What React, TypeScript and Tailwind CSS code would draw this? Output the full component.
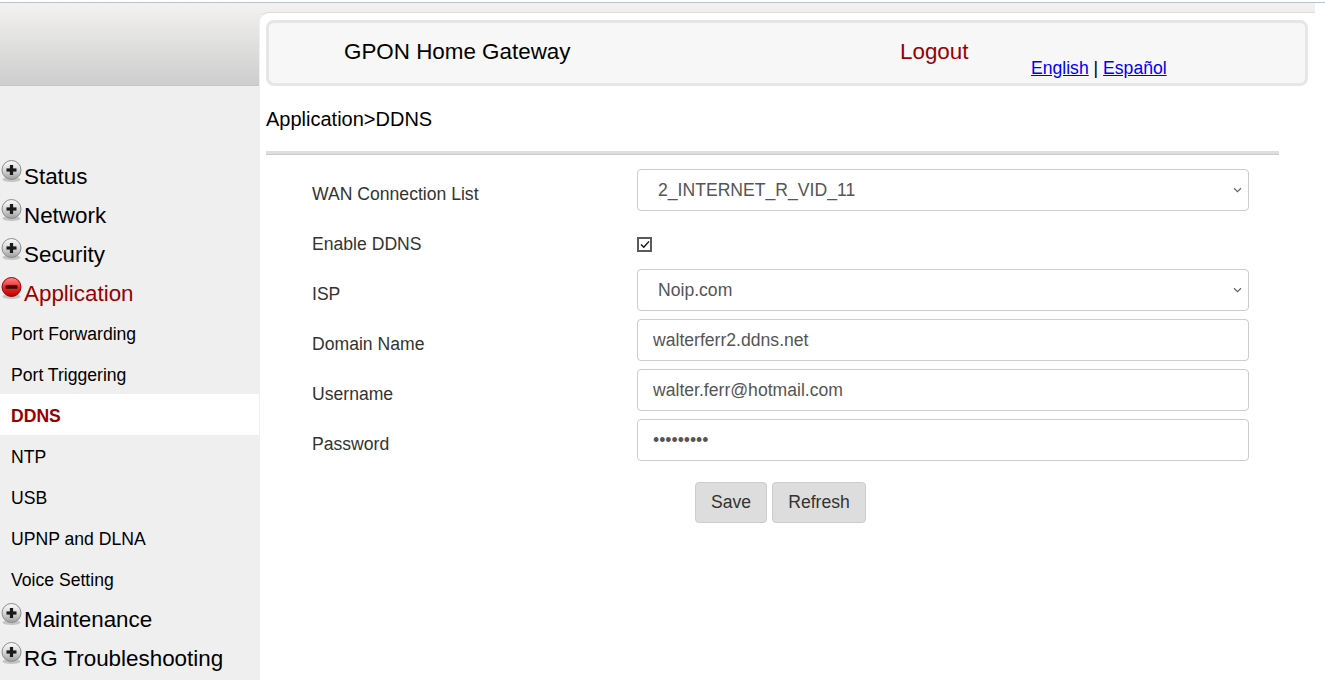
import React from "react";

const MenuIcon = ({ open }: { open?: boolean }) => (
  <svg width="21" height="23" viewBox="0 0 21 23" className="shrink-0 mb-[8px]">
    <defs>
      <linearGradient id="ballGray" x1="0" y1="0" x2="0" y2="1">
        <stop offset="0" stopColor="#fbfbfb" />
        <stop offset="0.5" stopColor="#d9d9d9" />
        <stop offset="1" stopColor="#9d9d9d" />
      </linearGradient>
      <linearGradient id="ballRed" x1="0" y1="0" x2="0" y2="1">
        <stop offset="0" stopColor="#ff8a8a" />
        <stop offset="0.5" stopColor="#ee2a2a" />
        <stop offset="1" stopColor="#b80000" />
      </linearGradient>
    </defs>
    <ellipse cx="10.5" cy="19.5" rx="9" ry="2.5" fill="#000" opacity="0.18" />
    <circle
      cx="10.5"
      cy="10"
      r="9.5"
      fill={open ? "url(#ballRed)" : "url(#ballGray)"}
      stroke={open ? "#9a0000" : "#8c8c8c"}
      strokeWidth="1"
    />
    {open ? (
      <rect x="4.5" y="8.3" width="12" height="3.4" rx="0.6" fill="#3a0808" />
    ) : (
      <>
        <rect x="5.5" y="8.4" width="10" height="3.2" fill="#1a1a1a" />
        <rect x="8.9" y="5" width="3.2" height="10" fill="#1a1a1a" />
      </>
    )}
  </svg>
);

const TopItem = ({ label, open }: { label: string; open?: boolean }) => (
  <div className="h-[39px] flex items-center pl-[1px] gap-[2px]">
    <MenuIcon open={open} />
    <span className={`pt-[2px] text-[22.4px] leading-[26px] ${open ? "text-[#990000]" : "text-black"}`}>
      {label}
    </span>
  </div>
);

const SubItem = ({ label, active }: { label: string; active?: boolean }) => (
  <div
    className={`h-[41px] flex items-center pl-[11px] pt-[4px] text-[17.6px] ${
      active ? "bg-white font-bold text-[#990000]" : "text-black"
    }`}
  >
    {label}
  </div>
);

const Chevron = () => (
  <svg
    width="9"
    height="6"
    viewBox="0 0 9 6"
    className="absolute right-[7px] top-1/2 -translate-y-1/2 pointer-events-none"
  >
    <path d="M1 1.2 L4.5 4.6 L8 1.2" fill="none" stroke="#666" strokeWidth="1.3" />
  </svg>
);

const Row = ({ label, children }: { label: string; children: React.ReactNode }) => (
  <div className="h-[50px] flex items-center">
    <div className="w-[325px] pt-[8px] text-[#333333]">{label}</div>
    {children}
  </div>
);

const inputCls =
  "w-[612px] h-[42px] border border-[#cccccc] rounded-[4px] bg-white pl-[15px] text-[#555555] text-[17.6px] outline-none";

export default function App() {
  return (
    <div className="font-['Liberation_Sans',Arial,sans-serif] text-[17.6px] bg-white min-h-[680px]">
      <div className="h-[2px] bg-white" />
      <div className="h-[1px] bg-[#b7c3d3]" />

      <div className="flex w-[1315px] h-[677px] bg-[linear-gradient(#f3f2f1,#cdcdcd)] bg-no-repeat bg-[length:100%_83px]">
        {/* Sidebar */}
        <div className="w-[259px] shrink-0 flex flex-col">
          <div className="h-[83px] border-b border-[#c6c6c6]" />
          <div className="flex-1 bg-[#efefef] pt-[70px]">
            <TopItem label="Status" />
            <TopItem label="Network" />
            <TopItem label="Security" />
            <TopItem label="Application" open />
            <SubItem label="Port Forwarding" />
            <SubItem label="Port Triggering" />
            <SubItem label="DDNS" active />
            <SubItem label="NTP" />
            <SubItem label="USB" />
            <SubItem label="UPNP and DLNA" />
            <SubItem label="Voice Setting" />
            <TopItem label="Maintenance" />
            <TopItem label="RG Troubleshooting" />
          </div>
        </div>

        {/* Main */}
        <div className="flex-1 pt-[9px] flex flex-col">
          <div className="flex-1 bg-white rounded-tl-[10px] border-t border-l border-t-[#dcdcdc] border-l-[#efefef] px-[6px] pt-[7px]">
            <div className="w-[1042px] h-[66px] rounded-[8px] border-[3px] border-[#e6e6e6] bg-[#f7f7f7] flex items-center pb-[2px]">
              <div className="w-[631px] pl-[75px] text-[22.4px] text-black">GPON Home Gateway</div>
              <div className="w-[131px] text-[22.4px] text-[#990000]">Logout</div>
              <div className="mt-[32px] text-[17.6px] text-black">
                <a href="#" className="text-[#0000ee] underline">English</a>
                {" | "}
                <a href="#" className="text-[#0000ee] underline">Español</a>
              </div>
            </div>

            <div className="mt-[21px] text-[20px] leading-[24px] text-black">Application&gt;DDNS</div>

            <div className="mt-[20px] w-[1013px] h-[4px] bg-[#dedede] border-b border-[#cbcbcb]" />

            <div className="mt-[10px] pl-[46px]">
              <Row label="WAN Connection List">
                <div className="relative">
                  <select className={`${inputCls} appearance-none pl-[20px]`} defaultValue="2_INTERNET_R_VID_11">
                    <option>2_INTERNET_R_VID_11</option>
                  </select>
                  <Chevron />
                </div>
              </Row>
              <Row label="Enable DDNS">
                <span className="mt-[8px] w-[15px] h-[15px] border-2 border-[#5a5a5a] bg-white flex items-center justify-center">
                  <svg width="10" height="9" viewBox="0 0 10 9">
                    <path d="M1 4.6 L3.8 7.3 L9 1.4" fill="none" stroke="#111" strokeWidth="1.4" />
                  </svg>
                </span>
              </Row>
              <Row label="ISP">
                <div className="relative">
                  <select className={`${inputCls} appearance-none pl-[20px]`} defaultValue="Noip.com">
                    <option>Noip.com</option>
                  </select>
                  <Chevron />
                </div>
              </Row>
              <Row label="Domain Name">
                <input className={inputCls} readOnly defaultValue="walterferr2.ddns.net" />
              </Row>
              <Row label="Username">
                <input className={inputCls} readOnly defaultValue="walter.ferr@hotmail.com" />
              </Row>
              <Row label="Password">
                <input className={inputCls} type="password" readOnly defaultValue="123456789" />
              </Row>
            </div>

            <div className="mt-[17px] ml-[429px] flex gap-[5px]">
              <button className="w-[72px] h-[41px] bg-[#dddddd] border border-[#cccccc] rounded-[4px] text-[#333333]">
                Save
              </button>
              <button className="w-[94px] h-[41px] bg-[#dddddd] border border-[#cccccc] rounded-[4px] text-[#333333]">
                Refresh
              </button>
            </div>
          </div>
        </div>
      </div>
    </div>
  );
}
